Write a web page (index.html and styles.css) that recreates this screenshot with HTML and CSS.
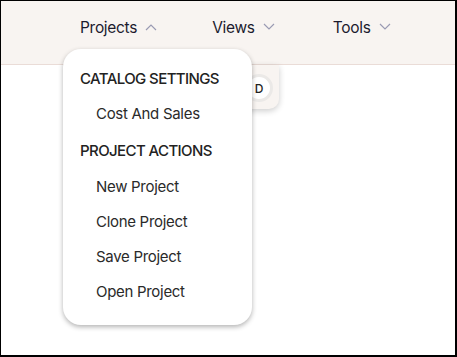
FILE: index.html
```html
<!DOCTYPE html>
<html lang="en">
<head>
  <meta charset="UTF-8">
  <meta name="viewport" content="width=device-width, initial-scale=1.0">
  <title>Menu</title>
  <link rel="stylesheet" href="styles.css">
</head>
<body>
  <div class="frame">
    <header class="topbar">
      <nav class="nav">
        <div class="nav-item">Projects
          <svg class="chev" width="12" height="8" viewBox="0 0 12 8"><path d="M1 7L6 2l5 5" fill="none" stroke="#9a9bb3" stroke-width="1.2"/></svg>
        </div>
        <div class="nav-item">Views
          <svg class="chev" width="12" height="8" viewBox="0 0 12 8"><path d="M1 1l5 5 5-5" fill="none" stroke="#9a9bb3" stroke-width="1.2"/></svg>
        </div>
        <div class="nav-item nav-last">Tools
          <svg class="chev" width="12" height="8" viewBox="0 0 12 8"><path d="M1 1l5 5 5-5" fill="none" stroke="#9a9bb3" stroke-width="1.2"/></svg>
        </div>
      </nav>
    </header>

    <!-- card sitting behind the open menu -->
    <div class="user-card">
      <span class="avatar">D</span>
    </div>

    <div class="dropdown">
      <div class="group-title">CATALOG SETTINGS</div>
      <div class="menu-link">Cost And Sales</div>
      <div class="group-title">PROJECT ACTIONS</div>
      <div class="menu-link">New Project</div>
      <div class="menu-link">Clone Project</div>
      <div class="menu-link">Save Project</div>
      <div class="menu-link">Open Project</div>
    </div>
  </div>
</body>
</html>
```

FILE: styles.css
```css
* { margin: 0; padding: 0; box-sizing: border-box; }
body {
  font-family: 'Inter', sans-serif;
  background: #fff;
}
.frame {
  position: relative;
  width: 457px;
  height: 357px;
  border: 1px solid #000;
  border-right-width: 2px;
  border-bottom-width: 2px;
  overflow: hidden;
}
.topbar {
  height: 64px;
  background: #f8f4f1;
  border-bottom: 1px solid #eadcd7;
}
.nav {
  display: flex;
  align-items: center;
  gap: 55px;
  padding: 17px 0 0 79px;
}
.nav-item {
  display: flex;
  align-items: center;
  gap: 8px;
  font-size: 15.5px;
  letter-spacing: -0.3px;
  color: #1c1b2e;
}
.nav-last { margin-left: 3px; }
.chev { margin-top: -1px; }

.user-card {
  position: absolute;
  left: 200px;
  top: 64px;
  width: 78px;
  height: 44px;
  background: #f8f4f1;
  border-radius: 0 0 10px 10px;
  box-shadow: 0 2px 6px rgba(0,0,0,0.2);
  display: flex;
  align-items: center;
  justify-content: flex-end;
  padding-right: 6px;
}
.avatar {
  width: 28px;
  height: 28px;
  margin-top: 2px;
  border-radius: 50%;
  background: #fff;
  border: 3px solid #ebe9e7;
  font-size: 12px;
  font-weight: 500;
  color: #222;
  display: flex;
  align-items: center;
  justify-content: center;
}

.dropdown {
  position: absolute;
  left: 62px;
  top: 48px;
  width: 189px;
  height: 276px;
  background: #fff;
  border-radius: 18px;
  box-shadow: 0 2px 5px rgba(0,0,0,0.3);
  padding: 18px 0 0 17px;
}
.group-title {
  font-size: 15px;
  font-weight: 500;
  letter-spacing: -0.6px;
  color: #222;
  height: 35px;
  line-height: 24px;
}
.menu-link {
  font-size: 15px;
  letter-spacing: -0.3px;
  color: #2a2a2a;
  padding-left: 16px;
  height: 35px;
  line-height: 24px;
}
.menu-link + .group-title { height: 38px; padding-top: 2px; }
```
